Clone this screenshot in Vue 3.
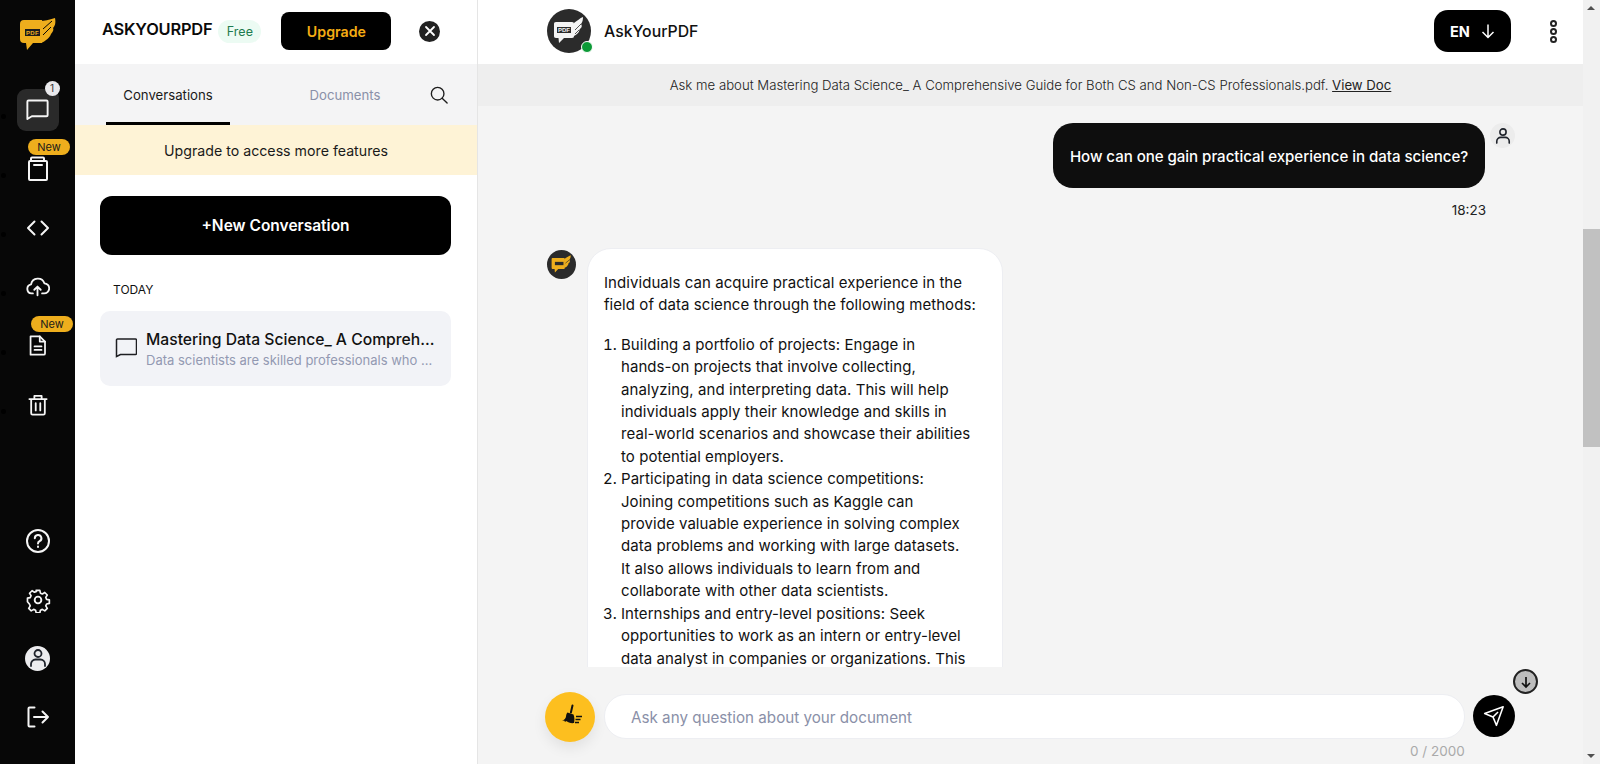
<script setup>
const first = ['Building a portfolio of projects: Engage in','hands-on projects that involve collecting,','analyzing, and interpreting data. This will help','individuals apply their knowledge and skills in','real-world scenarios and showcase their abilities','to potential employers.']
const second = ['Participating in data science competitions:','Joining competitions such as Kaggle can','provide valuable experience in solving complex','data problems and working with large datasets.','It also allows individuals to learn from and','collaborate with other data scientists.']
const third = ['Internships and entry-level positions: Seek','opportunities to work as an intern or entry-level','data analyst in companies or organizations. This']
const list = [first, second, third]
</script>

<template>
  <div class="app">
    <nav class="rail">
      <div class="rail-logo">
        <svg width="38" height="36" viewBox="0 0 38 36">
          <path d="M6 3H24V26H15L9 33 8 26H6a4 4 0 0 1-4-4V7a4 4 0 0 1 4-4z" fill="#eeae1d"/>
          <path d="M22 4C26 4 31 3 37 1 38 6 37 9 35 11 36 12 35 15 33 17 32 20 28 24 23 26z" fill="#eeae1d"/>
          <path d="M25 12L34 4M25 18L33 10" stroke="#070707" stroke-width="1" fill="none"/>
          <rect x="7" y="12" width="15" height="7" fill="#1c1c1c"/>
          <text x="14.500" y="18" text-anchor="middle" class="pdf-text" fill="#eeae1d">PDF</text>
        </svg>
      </div>
      <ul class="rail-list">
        <li class="rail-item">
          <span class="active-box">
            <svg width="27" height="27" viewBox="0 0 24 24" class="ic thin"><path d="M3 19.500V5a1 1 0 0 1 1-1h16a1 1 0 0 1 1 1v12a1 1 0 0 1-1 1H7l-4 2.500z"/></svg>
            <span class="count">1</span>
          </span>
        </li>
        <li class="rail-item">
          <span class="new new-a">New</span>
          <svg width="24" height="28" viewBox="0 0 24 28" class="ic"><path d="M5 6V3.500a1 1 0 0 1 1-1h11a1 1 0 0 1 1 1V6"/><rect x="3" y="6" width="18" height="19" rx="1"/><path d="M8 10h8"/></svg>
        </li>
        <li class="rail-item">
          <svg width="26" height="20" viewBox="0 0 26 20" class="ic"><path d="M9.500 3.500L3 10l6.500 6.500M16.500 3.500L23 10l-6.500 6.500"/></svg>
        </li>
        <li class="rail-item">
          <svg width="25" height="22" viewBox="0 0 26 24" class="ic"><path d="M8 19H6.500A5 5 0 0 1 6 9.100 7.500 7.500 0 0 1 20.500 8 5.500 5.500 0 0 1 20 19h-2"/><path d="M13 21v-9M9.500 15l3.500-3.500 3.500 3.500"/></svg>
        </li>
        <li class="rail-item">
          <span class="new new-b">New</span>
          <svg width="18" height="21" viewBox="0 0 20 24" class="ic"><path d="M2 1.500h10l6 6V21a1.500 1.500 0 0 1-1.500 1.500h-15V1.500z"/><path d="M12 1.500V7.500h6M6 13h8M6 17h8"/></svg>
        </li>
        <li class="rail-item">
          <svg width="20" height="22" viewBox="0 0 22 24" class="ic"><path d="M1.500 5.500h19M7 5.500V2h8v3.500M3.500 5.500V21a1.500 1.500 0 0 0 1.500 1.500h12a1.500 1.500 0 0 0 1.500-1.500V5.500M8.500 10v8M13.500 10v8"/></svg>
        </li>
      </ul>
      <div class="rail-bottom">
        <div class="rail-item b">
          <svg width="26" height="26" viewBox="0 0 26 26" class="ic"><circle cx="13" cy="13" r="11"/><path d="M9.800 10.200a3.300 3.300 0 1 1 4.800 3c-1.100.6-1.600 1.200-1.600 2.300"/><path d="M13 18.500v.6"/></svg>
        </div>
        <div class="rail-item b">
          <svg width="26" height="26" viewBox="0 0 28 28" class="ic"><path d="M11.800 2.500h4.400l.7 3.300 2.300 1 2.900-1.800 3 3-1.800 2.900 1 2.300 3.300.7v4.200l-3.300.7-1 2.300 1.800 2.900-3 3-2.900-1.800-2.300 1-.7 3.300h-4.400l-.7-3.300-2.300-1-2.900 1.800-3-3 1.800-2.900-1-2.300L1.400 16v-4.200l3.300-.7 1-2.300L3.900 5.900l3-3 2.900 1.800 2.300-1z" transform="translate(1.400 1.400) scale(.9)"/><circle cx="14" cy="14" r="3.600"/></svg>
        </div>
        <div class="rail-item b">
          <span class="user-disc">
            <svg width="18" height="20" viewBox="0 0 18 20" class="ic dark"><circle cx="9" cy="5.500" r="3.500"/><path d="M2 18v-2a4.500 4.500 0 0 1 4.500-4.500h5A4.500 4.500 0 0 1 16 16v2"/></svg>
          </span>
        </div>
        <div class="rail-item b">
          <svg width="24" height="24" viewBox="0 0 24 24" class="ic"><path d="M8.500 2.500H3.500a1 1 0 0 0-1 1v17a1 1 0 0 0 1 1h5M8 12h14M16.500 6.500L22 12l-5.500 5.500"/></svg>
        </div>
      </div>
    </nav>

    <aside class="side">
      <div class="side-top">
        <span class="brand">ASKYOURPDF</span>
        <span class="free">Free</span>
        <button class="upgrade">Upgrade</button>
        <span class="close">
          <svg width="12" height="12" viewBox="0 0 12 12"><path d="M2 2l8 8M10 2l-8 8" stroke="#fff" stroke-width="1.800" stroke-linecap="round"/></svg>
        </span>
      </div>
      <div class="tabs">
        <span class="tab on">Conversations</span>
        <span class="tab">Documents</span>
        <svg class="search" width="20" height="20" viewBox="0 0 20 20"><circle cx="8.500" cy="8.500" r="7"/><path d="M13.500 13.500L19 19"/></svg>
      </div>
      <div class="banner">Upgrade to access more features</div>
      <div class="side-body">
        <button class="new-conv">+New Conversation</button>
        <div class="today">TODAY</div>
        <div class="conv">
          <svg width="22" height="22" viewBox="0 0 22 22" class="conv-ic"><path d="M1.500 19.500V3a1 1 0 0 1 1-1h18a1 1 0 0 1 1 1v13.500a1 1 0 0 1-1 1H5.500l-4 2z"/></svg>
          <div class="conv-text">
            <div class="conv-title">Mastering Data Science_ A Compreh...</div>
            <div class="conv-sub">Data scientists are skilled professionals who ...</div>
          </div>
        </div>
      </div>
    </aside>

    <main class="main">
      <header class="head">
        <span class="avatar">
          <svg width="44" height="44" viewBox="0 0 44 44">
            <circle cx="22" cy="22" r="22" fill="#2b2b2b"/>
            <path d="M9 13h16c1.500 0 2 .7 2 2v12c0 1.300-.5 2-2 2H17l-5 5-.5-5H9c-1.500 0-2-.7-2-2V15c0-1.300.5-2 2-2z" fill="#f4f4f4"/>
            <path d="M27 14c3-2 6-5 9-6 0 3-.5 5-2 7 1 1 1 3 0 4-1 .5-1 1-1.500 1.500 0 1.500-1 3-2 4-1 1-2.500 2-3.500 2.500z" fill="#f4f4f4"/>
            <path d="M28 21l6-6M28 25l4-4" stroke="#2b2b2b" stroke-width=".8"/>
            <rect x="10" y="18" width="14" height="6" fill="#2b2b2b"/>
            <text x="17" y="23.200" text-anchor="middle" class="pdf-small" fill="#f4f4f4">PDF</text>
          </svg>
          <i class="online"></i>
        </span>
        <span class="head-name">AskYourPDF</span>
        <button class="lang">EN
          <svg width="14" height="16" viewBox="0 0 14 16"><path d="M7 1.500v13M1.500 9L7 14.500 12.500 9" stroke="#fff" stroke-width="1.500" fill="none"/></svg>
        </button>
        <span class="dots"><i></i><i></i><i></i></span>
      </header>
      <div class="docbar">Ask me about Mastering Data Science_ A Comprehensive Guide for Both CS and Non-CS Professionals.pdf.&nbsp;<u>View Doc</u></div>

      <section class="chat">
        <div class="me-row">
          <div class="me-col">
            <div class="me-bubble">How can one gain practical experience in data science?</div>
            <div class="time">18:23</div>
          </div>
          <span class="me-av">
            <svg width="16" height="18" viewBox="0 0 18 20" class="ic dark"><circle cx="9" cy="5.500" r="3.500"/><path d="M2 18v-2a4.500 4.500 0 0 1 4.500-4.500h5A4.500 4.500 0 0 1 16 16v2"/></svg>
          </span>
        </div>
        <div class="bot-row">
          <span class="bot-av">
            <svg width="29" height="29" viewBox="0 0 44 44">
              <circle cx="22" cy="22" r="22" fill="#2b2b2b"/>
              <path d="M9 12h16c1.500 0 2 .7 2 2v13c0 1.300-.5 2-2 2H17l-5 5-.5-5H9c-1.500 0-2-.7-2-2V14c0-1.300.5-2 2-2z" fill="#eeae1d"/>
              <path d="M26 14c3-2 7-5 10-6 0 3-.5 5-2 7 1 1 1 3 0 4-1 .5-1 1-1.500 1.500 0 1.500-1 3-2 4-1 1-2.500 2-4.500 2.500z" fill="#eeae1d"/>
              <path d="M28 20l6-5" stroke="#2b2b2b" stroke-width="1"/>
              <rect x="12" y="18" width="13" height="5" fill="#2b2b2b"/>
            </svg>
          </span>
          <div class="bot-bubble">
            <p>Individuals can acquire practical experience in the<br>field of data science through the following methods:</p>
            <ol>
              <li v-for="(item, i) in list" :key="i"><template v-for="(l, j) in item" :key="j">{{ l }}<br></template></li>
            </ol>
          </div>
        </div>
      </section>

      <footer class="composer">
        <span class="down">
          <svg width="14" height="14" viewBox="0 0 14 14"><path d="M7 2v10M3 8l4 4 4-4" stroke="#111" stroke-width="1.700" fill="none"/></svg>
        </span>
        <span class="broom">
          <svg width="26" height="26" viewBox="0 0 26 26">
            <path d="M15.500 1.500l-1.600 7" stroke="#111" stroke-width="2" stroke-linecap="round"/>
            <path d="M10.500 8.500l6 2c1 2.500 1.200 5 .6 8.500-3 .5-6-.5-8-2l-1 1-1-1.500-2 .5c2-1 4-3 4-5 0-1.500.8-3 1.400-3.500z" fill="#111"/>
            <path d="M19 12.500h6M18.500 15.500h5M18 18.500h4" stroke="#111" stroke-width="1.500"/>
          </svg>
        </span>
        <div class="field">Ask any question about your document</div>
        <span class="send">
          <svg width="24" height="24" viewBox="0 0 24 24"><path d="M1.800 9.300L22 2l-7.300 20.200-3.800-9.100z" stroke="#fff" stroke-width="1.700" fill="none" stroke-linejoin="round"/><path d="M10.900 13.100l5.500-5.500" stroke="#fff" stroke-width="1.700"/></svg>
        </span>
        <span class="counter">0 / 2000</span>
      </footer>
    </main>

    <div class="scroll">
      <span class="arrow up"></span>
      <span class="thumb"></span>
      <span class="arrow dn"></span>
    </div>
  </div>
</template>

<style>
html, body { margin: 0; background: #fff; overflow: hidden; }
</style>

<style scoped>
.app { display: flex; width: 1600px; height: 764px; overflow: hidden; font-family: Inter, "Liberation Sans", sans-serif; color: #111; }
button { font-family: inherit; border: 0; cursor: pointer; }
.ic { fill: none; stroke: #f5f5f5; stroke-width: 2; stroke-linecap: round; stroke-linejoin: round; display: block; }
.ic.thin { stroke-width: 1.700; }
.ic.dark { stroke: #20242c; stroke-width: 1.800; }
.pdf-text { font: 700 6px "Liberation Sans", sans-serif; letter-spacing: .3px; }
.pdf-small { font: 700 6px "Liberation Sans", sans-serif; }

.rail { flex: 0 0 75px; background: #070707; display: flex; flex-direction: column; }
.rail-logo { height: 80px; box-sizing: border-box; padding: 17px 0 0 18px; }
.rail-logo svg { display: block; }
.rail-list { list-style: none; margin: 0; padding: 0; }
.rail-item { height: 59px; display: flex; align-items: center; justify-content: center; position: relative; }
.rail-list .rail-item::before { content: ""; position: absolute; left: 1px; top: 34px; width: 5px; height: 5px; border-radius: 50%; background: #000; }
.active-box { width: 42px; height: 42px; border-radius: 9px; background: #2a2a2a; display: flex; align-items: center; justify-content: center; position: relative; }
.count { position: absolute; top: -8px; right: -1px; width: 15px; height: 15px; border-radius: 50%; background: #e9e9ec; color: #333; font-size: 10px; line-height: 15px; text-align: center; }
.new { position: absolute; height: 16px; line-height: 16px; width: 42px; border-radius: 8px; background: #eeae1d; color: #1a1a1a; font-size: 11px; text-align: center; }
.new-a { top: 0; left: 28px; }
.new-b { top: 0; left: 31px; }
.rail-bottom { margin-top: auto; padding-bottom: 18px; }
.rail-item.b { height: 58.500px; }
.user-disc { width: 25px; height: 25px; border-radius: 50%; background: #ececee; display: flex; align-items: center; justify-content: center; }

.side { flex: 0 0 402px; border-right: 1px solid #e5e5e5; background: #fff; display: flex; flex-direction: column; }
.side-top { height: 64px; box-sizing: border-box; padding: 0 0 2px 27px; display: flex; align-items: center; }
.brand { font-size: 16.400px; font-weight: 600; letter-spacing: -.2px; color: #0a0a0a; margin-top: -4px; white-space: nowrap; }
.free { margin-left: 6px; width: 43px; height: 23px; line-height: 23px; border-radius: 12px; background: #ecfbf3; color: #1e7b4f; font-size: 12.500px; text-align: center; }
.upgrade { margin-left: 20px; width: 110px; height: 38px; border-radius: 8px; background: #000; color: #f5ac13; font-size: 14.200px; font-weight: 600; padding: 0; }
.close { margin-left: 28px; width: 21px; height: 21px; border-radius: 50%; background: #222; display: flex; align-items: center; justify-content: center; }
.tabs { height: 61px; background: #f4f4f5; display: flex; position: relative; padding-left: 31px; box-sizing: border-box; }
.tab { width: 124px; text-align: center; line-height: 63px; font-size: 13.200px; color: #8a90a8; box-sizing: border-box; height: 61px; }
.tab.on { color: #1a1a1a; border-bottom: 3px solid #000; }
.tab + .tab { margin-left: 55px; width: 120px; }
.search { position: absolute; left: 355px; top: 22px; fill: none; stroke: #1d1d1d; stroke-width: 1.500; stroke-linecap: round; width: 18px; height: 18px; }
.banner { height: 50px; line-height: 52px; text-align: center; background: #fef3d6; font-size: 14.200px; color: #1a1a1a; }
.side-body { padding: 21px 26px 0 25px; }
.new-conv { width: 100%; height: 59px; background: #000; color: #fff; border-radius: 12px; font-size: 15.500px; font-weight: 600; display: block; }
.today { font-size: 12px; margin: 27px 0 0 13px; line-height: 15px; color: #111; }
.conv { margin-top: 14px; height: 75px; border-radius: 10px; background: #f2f3f7; display: flex; align-items: center; padding-left: 15px; box-sizing: border-box; }
.conv-ic { fill: none; stroke: #1e1e22; stroke-width: 1.500; margin-top: -2px; flex: none; }
.conv-text { margin-left: 9px; white-space: nowrap; padding-top: 2px; }
.conv-title { font-size: 15.700px; font-weight: 500; line-height: 20px; color: #111; }
.conv-sub { font-size: 13px; line-height: 20px; color: #9399b2; }

.main { flex: 1; min-width: 0; background: #f4f4f4; position: relative; display: flex; flex-direction: column; }
.head { height: 64px; flex: none; background: #fff; display: flex; align-items: center; padding-left: 69px; position: relative; }
.avatar { width: 44px; height: 44px; position: relative; display: block; margin-top: -2px; }
.avatar svg { display: block; }
.online { position: absolute; right: -2px; bottom: 0; width: 10px; height: 10px; border: 1px solid #fff; border-radius: 50%; background: #0c9a36; }
.head-name { margin-left: 13px; font-size: 15.800px; font-weight: 500; color: #111; margin-top: -1px; }
.lang { position: absolute; left: 956px; top: 10px; width: 77px; height: 42px; border-radius: 14px; background: #000; color: #fff; font-size: 14.500px; font-weight: 700; display: flex; align-items: center; justify-content: center; gap: 11px; padding: 0; }
.dots { position: absolute; left: 1072px; top: 20px; display: flex; flex-direction: column; gap: 1px; }
.dots i { width: 7px; height: 7px; border: 2px solid #222; border-radius: 50%; box-sizing: border-box; display: block; }
.docbar { height: 42px; flex: none; background: #eee; line-height: 43px; text-align: center; font-size: 13.200px; font-weight: 300; color: #222; white-space: nowrap; }
.docbar u { font-weight: 400; }

.chat { flex: 1; min-height: 0; overflow: hidden; padding: 17px 0 0 69px; }
.me-row { display: flex; justify-content: flex-end; padding-right: 68px; gap: 5px; }
.me-col { display: flex; flex-direction: column; align-items: flex-end; }
.me-bubble { width: 432px; height: 65px; box-sizing: border-box; border-radius: 20px; background: #0e0e0e; color: #fff; font-size: 15.100px; font-weight: 500; line-height: 67px; text-align: center; white-space: nowrap; letter-spacing: -.05px; }
.time { font-size: 13.500px; line-height: 20px; margin-top: 12px; margin-right: -1px; color: #222; }
.me-av { width: 25px; height: 25px; border-radius: 50%; background: #ececec; display: flex; align-items: center; justify-content: center; }
.bot-row { display: flex; align-items: flex-start; margin-top: 28px; }
.bot-av { width: 29px; height: 29px; margin-top: 2px; flex: none; }
.bot-av svg { display: block; }
.bot-bubble { margin-left: 11px; width: 416px; box-sizing: border-box; background: #fff; border: 1px solid #edeef2; border-radius: 24px 24px 0 0; padding: 23px 16px; font-size: 15px; letter-spacing: .06px; line-height: 22.400px; color: #111; white-space: nowrap; }
.bot-bubble p { margin: 0 0 17px; }
.bot-bubble ol { margin: 0; padding: 0 0 0 17px; }

.composer { flex: none; height: 97px; position: relative; background: #f4f4f4; }
.broom { position: absolute; left: 67px; top: 25px; width: 50px; height: 50px; border-radius: 50%; background: #fdbf1f; box-shadow: 0 6px 14px rgba(0,0,0,.08); display: flex; align-items: center; justify-content: center; }
.field { position: absolute; left: 126px; top: 27px; width: 861px; height: 45px; box-sizing: border-box; border: 1px solid #edeef2; border-radius: 22px; background: #fff; padding-left: 26px; line-height: 45px; font-size: 15.200px; color: #8a90a8; }
.send { position: absolute; left: 995px; top: 28px; width: 42px; height: 42px; border-radius: 50%; background: #000; display: flex; align-items: center; justify-content: center; }
.send svg { width: 22px; height: 22px; }
.down { position: absolute; left: 1035px; top: 2px; width: 25px; height: 25px; box-sizing: border-box; border: 2px solid #222; border-radius: 50%; background: #bdbdbd; display: flex; align-items: center; justify-content: center; }
.counter { position: absolute; left: 932px; top: 76px; font-size: 13.500px; line-height: 17px; color: #aaa; }

.scroll { flex: 0 0 17px; background: #f1f1f1; position: relative; }
.thumb { position: absolute; left: 0; top: 229px; width: 17px; height: 218px; background: #c1c1c1; }
.arrow { position: absolute; left: 4px; width: 0; height: 0; border-left: 4px solid transparent; border-right: 4px solid transparent; }
.arrow.up { top: 6px; border-bottom: 4px solid #505050; }
.arrow.dn { bottom: 6px; border-top: 4px solid #505050; }
</style>
